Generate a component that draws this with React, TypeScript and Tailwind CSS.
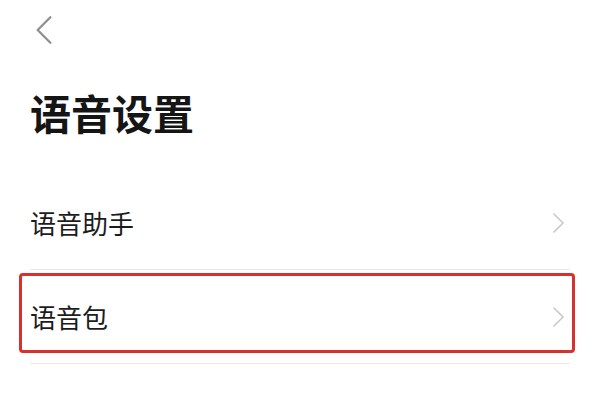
import React from "react";

const font = { fontFamily: '"Noto Sans CJK SC", "Noto Sans", sans-serif' };

function Chevron({ dir, className }: { dir: "left" | "right"; className?: string }) {
  return (
    <svg viewBox="0 0 12 22" className={className} fill="none" stroke="currentColor" strokeLinecap="round" strokeLinejoin="round">
      {dir === "left" ? <path d="M11 1 1 11l10 10" /> : <path d="M1 1l10 10L1 21" />}
    </svg>
  );
}

const rows = ["语音助手", "语音包"];

export default function App() {
  return (
    <div className="relative h-[404px] w-[600px] overflow-hidden bg-white" style={font}>
      <div className="pl-[36px] pt-[16px]">
        <Chevron dir="left" className="h-[28px] w-[16px] text-[#8f8f8f] [stroke-width:1.8]" />
      </div>
      <h1 className="mt-[48px] pl-[30px] text-[41px] font-bold leading-[40px] text-[#151515]">语音设置</h1>
      <div className="mt-[44px] px-[30px]">
        {rows.map((label) => (
          <div key={label} className="flex h-[94px] items-center justify-between border-b border-[#e9e9e9] pr-[6px]">
            <span className="text-[26px] leading-none text-[#1c1c1c]">{label}</span>
            <Chevron dir="right" className="h-[20px] w-[11px] text-[#c6c6c6] [stroke-width:1.6]" />
          </div>
        ))}
      </div>
      <div className="pointer-events-none absolute left-[19px] top-[273px] h-[80px] w-[556px] rounded-[4px] border-[3px] border-[#d8302c]" />
    </div>
  );
}
